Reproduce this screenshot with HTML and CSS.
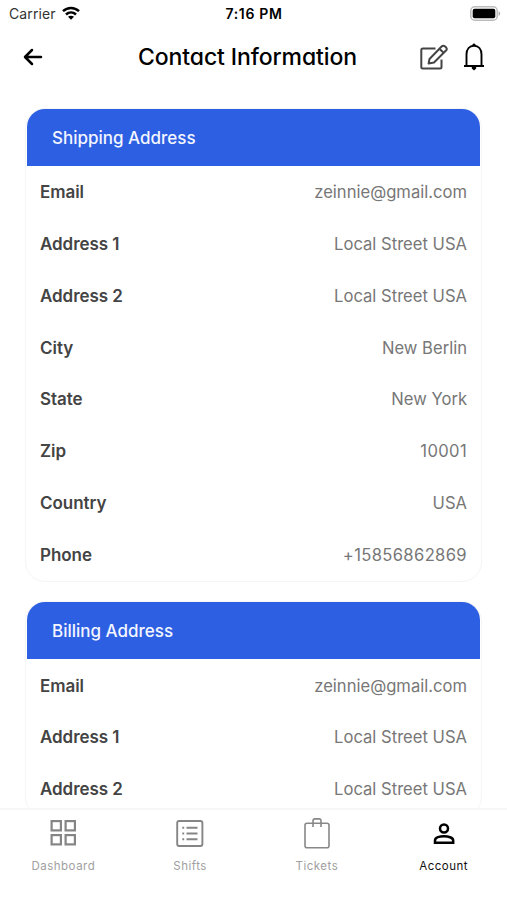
FILE: index.html
```html
<!DOCTYPE html>
<html lang="en">
<head>
<meta charset="utf-8">
<title>Contact Information</title>
<link rel="stylesheet" href="styles.css">
</head>
<body>
<div class="app">
  <div class="status">
    <div class="carrier"><span>Carrier</span>
      <svg width="18" height="14" viewBox="0 0 18 14" fill="none" stroke="#000" stroke-width="2.5"><path d="M1 5.2C5.6.8 12.4.8 17 5.2M4 8.5C6.9 5.8 11.1 5.8 14 8.5"/><path d="M6 10.8C7.7 9.3 10.3 9.3 12 10.8L9 13.8Z" fill="#000" stroke="none"/></svg>
    </div>
    <div class="time">7:16 PM</div>
    <div class="battery"><svg width="31" height="15" viewBox="0 0 31 15"><rect x=".8" y=".8" width="26.4" height="13.4" rx="4" fill="#fff" stroke="#bcbcbc" stroke-width="1.5"/><rect x="2.7" y="2.7" width="22.6" height="9.6" rx="2" fill="#000"/><path d="M28.6 5.2c2 .8 2 3.8 0 4.6z" fill="#aaa"/></svg></div>
  </div>
  <header class="topbar">
    <svg class="back" width="20" height="18" viewBox="0 0 20 18" fill="none" stroke="#000" stroke-width="2.5" stroke-linejoin="round" stroke-linecap="round"><path d="M9 2 2 9l7 7M2.4 9H18"/></svg>
    <h1>Contact Information</h1>
    <div class="actions">
      <svg width="28" height="26" viewBox="0 0 28 26" fill="none" stroke="#444" stroke-width="2" stroke-linejoin="round"><path d="M15.5 4.5H2.8Q1.3 4.5 1.3 6v17Q1.3 24.500 2.800 24.500H20Q21.500 24.500 21.500 23V15.500"/><path d="M9.500 15 21.600 2.500Q23.200 1 24.800 2.300L26.200 3.600Q27.400 5 26 6.500L14 18.500 8.600 19.600ZM19.400 4.700 23.900 9"/></svg>
      <svg width="20" height="28" viewBox="0 0 20 28" fill="none" stroke="#000" stroke-width="1.900"><path d="M2.500 23V11.500C2.500 6 5.500 2.700 10 2.700S17.500 6 17.500 11.500V23M0 23H20"/><path d="M8.300 2.200a1.700 1.700 0 0 1 3.400 0zM7.800 24h4.400v1.500L10 27.500 7.800 25.500z" fill="#000" stroke="none"/></svg>
    </div>
  </header>
  <main>
    <section class="card">
      <h2>Shipping Address</h2>
      <dl>
        <div><dt>Email</dt><dd>zeinnie@gmail.com</dd></div>
        <div><dt>Address 1</dt><dd>Local Street USA</dd></div>
        <div><dt>Address 2</dt><dd>Local Street USA</dd></div>
        <div><dt>City</dt><dd>New Berlin</dd></div>
        <div><dt>State</dt><dd>New York</dd></div>
        <div><dt>Zip</dt><dd class="number">10001</dd></div>
        <div><dt>Country</dt><dd>USA</dd></div>
        <div><dt>Phone</dt><dd class="number">+15856862869</dd></div>
      </dl>
    </section>
    <section class="card">
      <h2>Billing Address</h2>
      <dl>
        <div><dt>Email</dt><dd>zeinnie@gmail.com</dd></div>
        <div><dt>Address 1</dt><dd>Local Street USA</dd></div>
        <div><dt>Address 2</dt><dd>Local Street USA</dd></div>
      </dl>
    </section>
  </main>
  <nav>
    <a><svg width="32" height="32" viewBox="0 0 32 32" fill="none" stroke="#858585" stroke-width="2.200"><rect x="4.600" y="4.100" width="9.300" height="9.300"/><rect x="18.600" y="4.100" width="9.300" height="9.300"/><rect x="4.600" y="18.100" width="9.300" height="9.300"/><rect x="18.600" y="18.100" width="9.300" height="9.300"/></svg><span>Dashboard</span></a>
    <a><svg width="32" height="32" viewBox="0 0 32 32" fill="none" stroke="#858585" stroke-width="1.900"><rect x="3.200" y="4" width="25.200" height="25" rx="2"/><path d="M12.500 10.700H23.500M12.500 16.500H23.500M12.500 22.300H23.500M8.300 10.700h1.900M8.300 16.500h1.900M8.300 22.300h1.900"/></svg><span>Shifts</span></a>
    <a><svg width="32" height="32" viewBox="0 0 32 32" fill="none" stroke="#888" stroke-width="1.600"><rect x="4" y="6.300" width="24" height="24.400" rx="2"/><path d="M12 10V4Q12 1.900 14 1.900h4Q20 1.900 20 4v6"/></svg><span>Tickets</span></a>
    <a class="active"><svg width="32" height="32" viewBox="0 0 32 32" fill="none" stroke="#000" stroke-width="2.500"><circle cx="16" cy="11.500" r="4"/><path d="M7 25.700V23.500C7 20.500 12 19.300 16 19.300S25.200 20.500 25.200 23.500V25.700Z"/></svg><span>Account</span></a>
  </nav>
</div>
</body>
</html>
```
FILE: styles.css
```css
* { box-sizing: border-box; margin: 0; }
body { font-family: Inter, "Liberation Sans", sans-serif; background: #fff; color: #000; }
.app { height: 900px; display: flex; flex-direction: column; overflow: hidden; }
.status { height: 28px; flex: none; display: grid; grid-template-columns: 1fr auto 1fr; align-items: center; padding: 0 6px 2px 7px; font-size: 14px; }
.carrier { display: flex; align-items: center; gap: 6px; color: #333; letter-spacing: .1px; padding-left: 2px; }
.time { font-weight: 600; letter-spacing: .65px; }
.battery { display: flex; justify-content: flex-end; }
.topbar { height: 58px; flex: none; display: grid; grid-template-columns: 84px 1fr 96px; align-items: center; padding: 0 23px 0 23px; }
.topbar h1 { font-size: 23px; font-weight: 500; text-align: center; white-space: nowrap; font-feature-settings: "cv11"; letter-spacing: -.1px; }
.actions { display: flex; justify-content: flex-end; align-items: center; gap: 16px; }
main { flex: 1; min-height: 0; overflow: hidden; padding: 22px 25px 0; display: flex; flex-direction: column; gap: 19px; }
.card { flex: none; border: 1px solid #f5f5f5; border-radius: 20px; padding: 0 1px 1px; }
.card h2 { height: 57px; display: flex; align-items: center; padding-left: 25px; border-radius: 18px 18px 0 0; background: #2d5fe2; color: #f3f6ff; font-size: 17px; font-weight: 550; letter-spacing: 0; }
.card dl > div { height: 51.8px; display: flex; justify-content: space-between; align-items: center; padding: .5px 13px 0; font-size: 17px; }
.card dt { font-weight: 600; color: #444; letter-spacing: -.05px; }
.card dd { color: #777; font-size: 16.6px; }
.card .number { letter-spacing: .35px; }
nav { height: 92px; flex: none; border-top: 2px solid #f7f7f7; display: grid; grid-template-columns: repeat(4, 1fr); padding-top: 7px; }
nav a { display: flex; flex-direction: column; align-items: center; gap: 9px; color: #a0a0a0; font-size: 11.5px; line-height: 16px; letter-spacing: .5px; }
nav .active { color: #111; }
```
